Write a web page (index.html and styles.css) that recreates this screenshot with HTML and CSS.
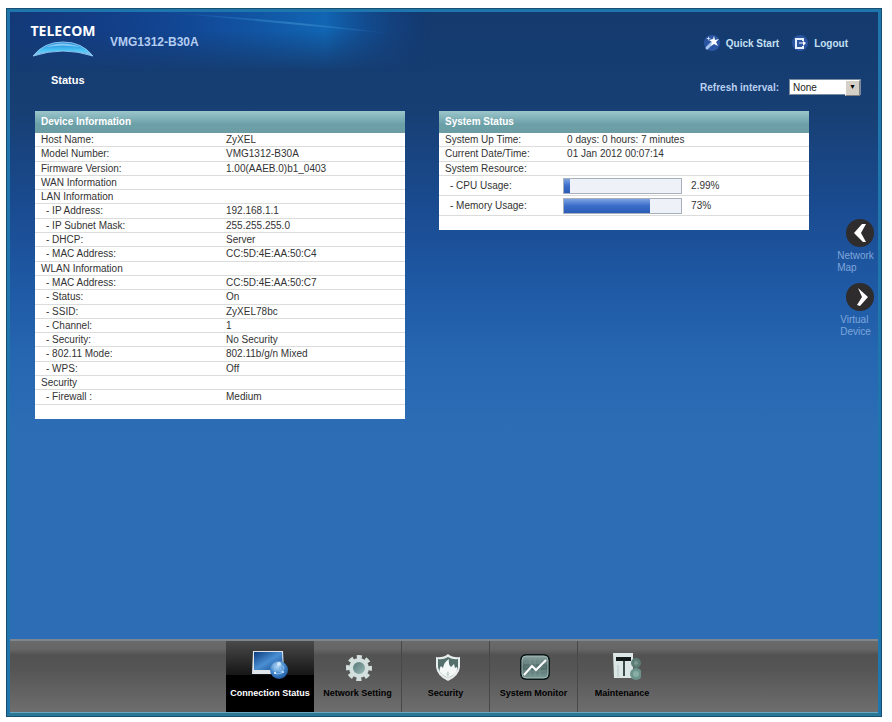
FILE: index.html
```html
<!DOCTYPE html>
<html lang="en">
<head>
    <meta charset="UTF-8">
    <meta name="viewport" content="width=device-width, initial-scale=1.0">
    <title>VMG1312-B30A | Status</title>
    <link rel="stylesheet" href="styles.css">
</head>
<body>

    <div class="frame">
        <header class="header">
            <svg class="glow" viewBox="0 0 420 60" preserveAspectRatio="none" aria-hidden="true">
                <defs>
                    <linearGradient id="glowFill" x1="0" y1="0" x2="1" y2="0">
                        <stop offset="0" stop-color="#1238a0" stop-opacity="0.2"/>
                        <stop offset="0.4" stop-color="#114ca4" stop-opacity="0.7"/>
                        <stop offset="0.75" stop-color="#1166b4"/>
                        <stop offset="1" stop-color="#12408c" stop-opacity="0"/>
                    </linearGradient>
                    <linearGradient id="glowFade" x1="0" y1="0" x2="0" y2="1">
                        <stop offset="0.3" stop-color="#fff"/>
                        <stop offset="1" stop-color="#000"/>
                    </linearGradient>
                    <linearGradient id="glowLine" x1="0" y1="0" x2="1" y2="0">
                        <stop offset="0" stop-color="#3a90d0" stop-opacity="0"/>
                        <stop offset="0.6" stop-color="#3a90d0" stop-opacity="0.6"/>
                        <stop offset="1" stop-color="#3a90d0" stop-opacity="0"/>
                    </linearGradient>
                    <mask id="glowMask"><rect width="420" height="60" fill="url(#glowFade)"/></mask>
                </defs>
                <rect width="420" height="60" fill="url(#glowFill)" mask="url(#glowMask)"/>
                <path d="M150 0 Q270 7 385 22 Q270 11 150 0z" fill="url(#glowLine)"/>
            </svg>

            <div class="logo">
                <span class="logo-text">TELECOM</span>
                <svg width="62" height="18" viewBox="0 0 62 18" aria-hidden="true">
                    <defs>
                        <linearGradient id="arc" x1="0" y1="0" x2="0" y2="1">
                            <stop offset="0" stop-color="#1c86d8"/>
                            <stop offset="0.6" stop-color="#4cc4f4"/>
                            <stop offset="1" stop-color="#9cc8f4"/>
                        </linearGradient>
                    </defs>
                    <path d="M1 16 Q12 2 31 2 Q50 2 61 16 Q46 11 31 11 Q16 11 1 16z" fill="url(#arc)" stroke="#8cc4f0" stroke-width="1"/>
                    <path d="M14 7 Q30 0 48 7 Q30 4 14 7z" fill="#8cccf4"/>
                </svg>
            </div>
            <span class="model">VMG1312-B30A</span>

            <nav class="top-links">
                <a href="#">
                    <svg width="18" height="18" viewBox="0 0 18 18" aria-hidden="true">
                        <circle cx="9" cy="9" r="8" fill="#2c56a4"/>
                        <path d="M4 14 L9 9" stroke="#a8c4f0" stroke-width="3" stroke-linecap="round"/>
                        <path d="M11 2 L12 6 L16 5 L13 8 L15 12 L11 10 L8 12 L9 8 L6 6 L10 5z" fill="#fff"/>
                        <path d="M5 2 l1 2 2 0 -2 1 0 2 -1 -2 -2 0 2 -1z" fill="#dce8ff"/>
                    </svg>
                    Quick Start
                </a>
                <a href="#">
                    <svg width="18" height="18" viewBox="0 0 18 18" aria-hidden="true">
                        <circle cx="9" cy="9" r="8" fill="#2c56a4"/>
                        <path d="M12 7 V5 H5 V14 H12 V12" fill="none" stroke="#e8f0ff" stroke-width="2"/>
                        <path d="M8 9 H13" stroke="#fff" stroke-width="1"/>
                        <path d="M12 7 L15 9 L12 12z" fill="#fff"/>
                    </svg>
                    Logout
                </a>
            </nav>
        </header>

        <div class="title-bar">
            <h1>Status</h1>
            <div class="refresh">
                <label for="refreshInterval">Refresh interval:</label>
                <span class="select-box">
                    <select id="refreshInterval">
                        <option>None</option>
                    </select>
                </span>
            </div>
        </div>

        <main class="main">
            <div class="panels">
                <section class="panel">
                    <h2>Device Information</h2>
                    <table class="info">
                        <tr><th>Host Name:</th><td>ZyXEL</td></tr>
                        <tr><th>Model Number:</th><td>VMG1312-B30A</td></tr>
                        <tr><th>Firmware Version:</th><td>1.00(AAEB.0)b1_0403</td></tr>
                        <tr><th>WAN Information</th><td></td></tr>
                        <tr><th>LAN Information</th><td></td></tr>
                        <tr class="sub"><th>- IP Address:</th><td>192.168.1.1</td></tr>
                        <tr class="sub"><th>- IP Subnet Mask:</th><td>255.255.255.0</td></tr>
                        <tr class="sub"><th>- DHCP:</th><td>Server</td></tr>
                        <tr class="sub"><th>- MAC Address:</th><td>CC:5D:4E:AA:50:C4</td></tr>
                        <tr><th>WLAN Information</th><td></td></tr>
                        <tr class="sub"><th>- MAC Address:</th><td>CC:5D:4E:AA:50:C7</td></tr>
                        <tr class="sub"><th>- Status:</th><td>On</td></tr>
                        <tr class="sub"><th>- SSID:</th><td>ZyXEL78bc</td></tr>
                        <tr class="sub"><th>- Channel:</th><td>1</td></tr>
                        <tr class="sub"><th>- Security:</th><td>No Security</td></tr>
                        <tr class="sub"><th>- 802.11 Mode:</th><td>802.11b/g/n Mixed</td></tr>
                        <tr class="sub"><th>- WPS:</th><td>Off</td></tr>
                        <tr><th>Security</th><td></td></tr>
                        <tr class="sub"><th>- Firewall :</th><td>Medium</td></tr>
                    </table>
                </section>

                <section class="panel">
                    <h2>System Status</h2>
                    <table class="info status">
                        <tr><th>System Up Time:</th><td>0 days: 0 hours: 7 minutes</td></tr>
                        <tr><th>Current Date/Time:</th><td>01 Jan 2012 00:07:14</td></tr>
                        <tr><th>System Resource:</th><td></td></tr>
                        <tr class="sub usage">
                            <th>- CPU Usage:</th>
                            <td><div class="meter"><div class="bar"><div class="fill" style="width: 5%"></div></div>2.99%</div></td>
                        </tr>
                        <tr class="sub usage">
                            <th>- Memory Usage:</th>
                            <td><div class="meter"><div class="bar"><div class="fill" style="width: 73%"></div></div>73%</div></td>
                        </tr>
                    </table>
                </section>
            </div>

            <aside class="side">
                <a href="#">
                    <svg width="28" height="28" viewBox="0 0 28 28" aria-hidden="true">
                        <circle cx="14" cy="14" r="14" fill="#2e2c2c"/>
                        <path d="M16 5 L20 5 L15 14 L20 23 L17 23 L8 14z" fill="#fff"/>
                    </svg>
                    <span>Network<br>Map</span>
                </a>
                <a href="#">
                    <svg width="28" height="28" viewBox="0 0 28 28" aria-hidden="true">
                        <circle cx="14" cy="14" r="14" fill="#2e2c2c"/>
                        <path d="M12 5 L22 14 L14 23 L11 22 L16 14z" fill="#fff"/>
                    </svg>
                    <span>Virtual<br>Device</span>
                </a>
            </aside>
        </main>

        <nav class="menu">
            <a class="active" href="#">
                <svg width="38" height="32" viewBox="0 0 38 32" aria-hidden="true">
                    <defs>
                        <linearGradient id="screen" x1="0" y1="0" x2="1" y2="1">
                            <stop offset="0" stop-color="#0d3c80"/>
                            <stop offset="0.5" stop-color="#4a8ed2"/>
                            <stop offset="1" stop-color="#12488e"/>
                        </linearGradient>
                        <radialGradient id="globe" cx="0.4" cy="0.3" r="0.8">
                            <stop offset="0" stop-color="#b8dcf8"/>
                            <stop offset="0.5" stop-color="#4488cc"/>
                            <stop offset="1" stop-color="#164c94"/>
                        </radialGradient>
                    </defs>
                    <path d="M2 2 H32 L33 22 H28 V25 H1z" fill="#dfe5ea"/>
                    <path d="M3 3 H31 L32 21 H3z" fill="url(#screen)"/>
                    <circle cx="28" cy="21" r="9" fill="url(#globe)"/>
                    <path d="M23 18 L28 15 L33 18 L31 24 L25 25z M28 15 L31 24 M23 18 L31 24" fill="none" stroke="#88bcec" stroke-width="1"/>
                    <circle cx="28" cy="15" r="2" fill="#d0e8fc"/>
                    <circle cx="32" cy="23" r="1" fill="#cce4fa"/>
                    <circle cx="24" cy="24" r="1" fill="#fff"/>
                </svg>
                Connection Status
            </a>
            <a href="#">
                <svg width="38" height="32" viewBox="0 0 38 32" aria-hidden="true">
                    <defs>
                        <linearGradient id="hub" x1="0" y1="0" x2="1" y2="1">
                            <stop offset="0" stop-color="#4c6c6c"/>
                            <stop offset="1" stop-color="#a4c4c2"/>
                        </linearGradient>
                    </defs>
                    <circle cx="20" cy="19" r="11" fill="none" stroke="#d4e0de" stroke-width="4" stroke-dasharray="5 3.64" stroke-dashoffset="2.5"/>
                    <circle cx="20" cy="19" r="8" fill="url(#hub)" stroke="#d4e0de" stroke-width="4"/>
                </svg>
                Network Setting
            </a>
            <a href="#">
                <svg width="38" height="32" viewBox="0 0 38 32" aria-hidden="true">
                    <path d="M21 5 Q26 9 33 8 V18 Q32 27 21 32 Q10 27 9 18 V8 Q16 9 21 5z" fill="#e8eeec"/>
                    <path d="M21 8 Q26 11 31 10 V18 Q30 25 21 29 Q12 25 11 18 V10 Q16 11 21 8z" fill="#55706c"/>
                    <path d="M16 26 Q10 22 14 17 L16 19 Q17 13 22 10 Q21 15 24 18 L27 15 L28 19 L30 18 Q31 23 26 26 L21 29z" fill="#f4f8f6"/>
                    <path d="M21 28 Q18 25 21 22 Q23 25 21 28z" fill="#c4d4d0"/>
                </svg>
                Security
            </a>
            <a href="#">
                <svg width="38" height="32" viewBox="0 0 38 32" aria-hidden="true">
                    <defs>
                        <linearGradient id="monitor" x1="0" y1="0" x2="0" y2="1">
                            <stop offset="0" stop-color="#8ca4a2"/>
                            <stop offset="0.5" stop-color="#4c6664"/>
                            <stop offset="1" stop-color="#7c9c98"/>
                        </linearGradient>
                    </defs>
                    <rect x="5" y="5" width="30" height="26" rx="6" fill="#0c1818"/>
                    <rect x="7" y="7" width="26" height="22" rx="4" fill="url(#monitor)" stroke="#a4bab8" stroke-width="1"/>
                    <path d="M9 22 H31 M9 18 H31 M9 14 H31 M15 10 V27 M20 10 V27 M25 10 V27" stroke="#8aa5a2" stroke-width="1" opacity="0.5"/>
                    <path d="M9 26 L17 17 L21 21 L31 11" fill="none" stroke="#fff" stroke-width="2"/>
                </svg>
                System Monitor
            </a>
            <a href="#">
                <svg width="38" height="32" viewBox="0 0 38 32" aria-hidden="true">
                    <path d="M10 4 H30 V29 H11z" fill="#dce6e4"/>
                    <rect x="13" y="8" width="15" height="4" fill="#101818"/>
                    <path d="M21 12 V27" stroke="#3c4c4a" stroke-width="2"/>
                    <path d="M15 16 V28" stroke="#b4c6c2" stroke-width="1"/>
                    <circle cx="33" cy="14" r="5" fill="#5c7c76"/>
                    <circle cx="33" cy="14" r="2" fill="#7c9892"/>
                    <circle cx="33" cy="25" r="6" fill="#6c948c"/>
                    <circle cx="33" cy="25" r="3" fill="#88aea6"/>
                </svg>
                Maintenance
            </a>
        </nav>
    </div>

</body>
</html>
```
FILE: styles.css
```css
* {
    box-sizing: border-box;
}

body {
    margin: 0;
    padding: 8px 10px 5px 6px;
    min-height: 100vh;
    display: flex;
    background-color: #fff;
    font-family: "Liberation Sans", Arial, sans-serif;
    font-size: 11px;
    color: #333;
}

a {
    text-decoration: none;
}

.frame {
    flex: 1;
    display: flex;
    flex-direction: column;
    border: 4px solid #1e76ac;
    border-bottom-color: #2b7895;
    outline: 1px solid #174f70;
    outline-offset: -1px;
    background: linear-gradient(#143a6e 0, #173f74 100px, #1a4c92 200px, #1f5aa6 280px, #2767b2 350px, #2c6db6 420px, #2c6db6 100%);
}

/* Header */
.header {
    position: relative;
    display: flex;
    align-items: center;
    height: 60px;
    padding: 0 30px 0 20px;
}

.header > * {
    position: relative;
}

.header .glow {
    position: absolute;
    left: 0;
    top: 0;
    width: 420px;
    height: 60px;
}

.logo {
    display: flex;
    flex-direction: column;
    align-items: center;
    gap: 2px;
    width: 66px;
    padding-bottom: 2px;
}

.logo-text {
    color: #fff;
    font-family: "Open Sans", sans-serif;
    font-size: 14px;
    font-weight: 700;
    line-height: 14px;
}

.model {
    margin-left: 14px;
    color: #b4cdf2;
    font-size: 12px;
    font-weight: bold;
}

.top-links {
    display: flex;
    gap: 12px;
    margin-left: auto;
    padding-top: 2px;
}

.top-links a {
    display: flex;
    align-items: center;
    gap: 5px;
    color: #c4e0f4;
    font-size: 10px;
    font-weight: bold;
}

.title-bar {
    display: flex;
    justify-content: space-between;
    align-items: flex-start;
    height: 39px;
    padding: 0 17px 0 41px;
}

h1 {
    margin: 0;
    color: #fff;
    font-size: 11px;
    line-height: 16px;
}

.refresh {
    display: flex;
    align-items: center;
    gap: 10px;
    padding-top: 7px;
    color: #b8d0f0;
    font-size: 10px;
    font-weight: bold;
}

.select-box {
    position: relative;
    display: flex;
}

.select-box select {
    appearance: none;
    width: 72px;
    height: 16px;
    padding: 0 3px;
    border: 1px solid #7c8ca0;
    border-radius: 0;
    background-color: #fff;
    color: #222;
    font-family: inherit;
    font-size: 10px;
}

.select-box::after {
    content: "▼";
    position: absolute;
    top: 1px;
    right: 1px;
    width: 13px;
    height: 14px;
    border: 1px solid #808080;
    border-top-color: #fff;
    border-left-color: #fff;
    background-color: #d4d0c8;
    color: #000;
    font-size: 7px;
    font-weight: normal;
    line-height: 12px;
    text-align: center;
    pointer-events: none;
}

/* Content */
.main {
    flex: 1;
    display: flex;
}

.panels {
    flex: 1;
    display: grid;
    grid-template-columns: 1fr 1fr;
    align-items: start;
    gap: 34px;
    padding: 0 0 20px 25px;
}

.panel {
    padding-bottom: 14px;
    background-color: #fff;
}

h2 {
    margin: 0;
    padding: 0 6px;
    background: linear-gradient(#9cc6cc, #6ba0a8 60%, #6d9da3);
    color: #fff;
    font-size: 10px;
    line-height: 22px;
}

.info {
    width: 100%;
    border-collapse: collapse;
    font-size: 10px;
    line-height: 1.43;
}

.info th,
.info td {
    height: 1.43em;
    padding: 0;
    box-shadow: inset 0 -1px #dcdcdc;
    font-weight: normal;
    text-align: left;
}

.info th {
    width: 50%;
    padding-left: 6px;
}

.info td {
    padding-left: 6px;
}

.info .sub th {
    padding-left: 11px;
}

.status th {
    width: 33%;
}

.info .usage th,
.info .usage td {
    height: 20px;
}

.info .usage td {
    padding-left: 2px;
}

.meter {
    display: flex;
    align-items: center;
    gap: 9px;
}

.bar {
    width: 119px;
    height: 16px;
    border: 1px solid #a8b0bc;
    background-color: #eef2f8;
}

.fill {
    height: 100%;
    background: linear-gradient(#7ba2e2, #3a6cc8 50%, #2a5cb8);
}

.side {
    display: flex;
    flex-direction: column;
    align-items: flex-end;
    gap: 9px;
    width: 69px;
    padding: 108px 4px 0 0;
}

.side a {
    display: flex;
    flex-direction: column;
    align-items: center;
    gap: 3px;
    width: 37px;
    color: #7ea6dc;
    font-size: 10px;
    line-height: 12px;
}

.side svg {
    align-self: flex-end;
}

/* Bottom menu */
.menu {
    display: flex;
    justify-content: center;
    height: 74px;
    padding-left: 4px;
    border-top: 2px solid #7d8790;
    border-bottom: 1px solid #6aa6c0;
    background: linear-gradient(#6a6a6a 0, #666 8px, #525252 14px, #555 28px, #6e6e6e 100%);
}

.menu a {
    display: flex;
    flex-direction: column;
    align-items: center;
    gap: 7px;
    width: 88px;
    padding-top: 8px;
    border-right: 1px solid #484848;
    color: #000;
    font-size: 9px;
    font-weight: bold;
    white-space: nowrap;
}

.menu a:last-child {
    border-right: none;
}

.menu .active {
    border-right: none;
    background: linear-gradient(#4a4a4a, #161616 34px, #000 34px);
    color: #fff;
}
```
